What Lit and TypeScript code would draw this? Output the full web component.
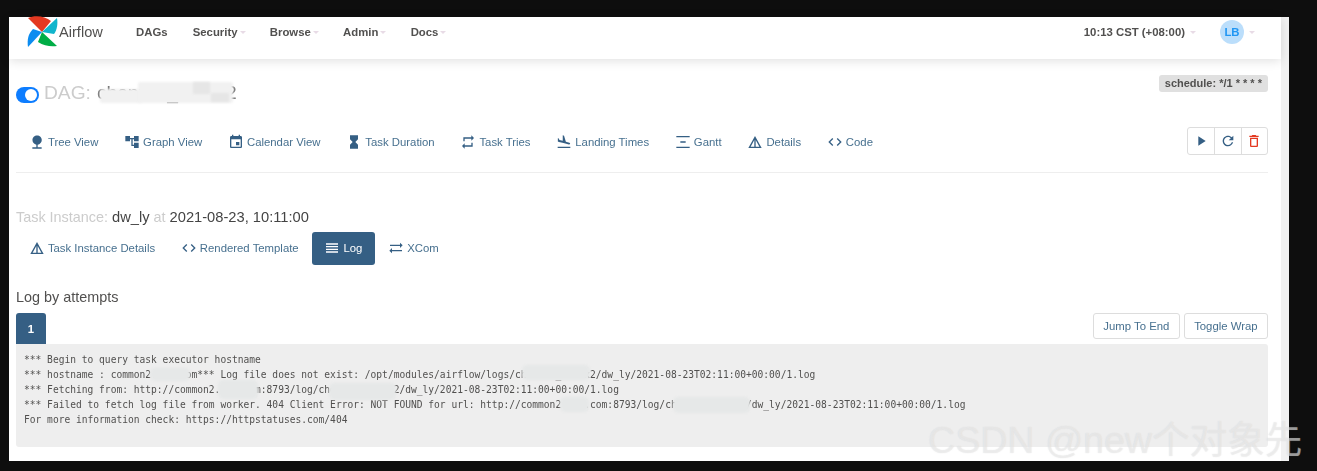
import { LitElement, html, css, svg } from "lit";
import { customElement } from "lit/decorators.js";

const I: Record<string, string> = {
  nature: "M13 16.12c3.47-.41 6.17-3.36 6.17-6.95 0-3.87-3.13-7-7-7s-7 3.13-7 7c0 3.47 2.52 6.34 5.83 6.89V20H5v2h14v-2h-6v-3.88z",
  tree: "M22 11V3h-7v3H9V3H2v8h7V8h2v10h4v3h7v-8h-7v3h-2V8h2v3z",
  event: "M17 12h-5v5h5v-5zM16 1v2H8V1H6v2H5c-1.11 0-1.99.9-1.99 2L3 19c0 1.1.89 2 2 2h14c1.1 0 2-.9 2-2V5c0-1.1-.9-2-2-2h-1V1h-2zm3 18H5V8h14v11z",
  hourglass: "M6 2v6h.01L6 8.01 10 12l-4 4 .01.01H6V22h12v-5.99h-.01L18 16l-4-4 4-3.99-.01-.01H18V2H6z",
  repeat: "M7 7h10v3l4-4-4-4v3H5v6h2V7zm10 10H7v-3l-4 4 4 4v-3h12v-6h-2v4z",
  land: "M2.5 19h19v2h-19zm7.18-5.73l4.35 1.16 5.31 1.42c.8.21 1.62-.26 1.84-1.06.21-.8-.26-1.62-1.06-1.84l-5.31-1.42-2.76-9.02L10.12 2v8.28L5.15 8.95l-.93-2.32-1.45-.39v5.17l1.6.43 5.31 1.43z",
  gantt: "M2 3h20v2H2zM8 11h8v2H8zM2 19h20v2H2z",
  details: "M12 3L2 21h20L12 3zm1 5.92L18.6 19H13V8.92zm-2 0V19H5.4L11 8.92z",
  code: "M9.4 16.6L4.8 12l4.6-4.6L8 6l-6 6 6 6 1.4-1.4zm5.2 0l4.6-4.6-4.6-4.6L16 6l6 6-6 6-1.4-1.4z",
  reorder: "M3 15h18v-2H3v2zm0 4h18v-2H3v2zm0-8h18V9H3v2zm0-6v2h18V5H3z",
  xcom: "M22 8l-4-4v3H3v2h15v3l4-4zM2 16l4 4v-3h15v-2H6v-3l-4 4z",
  play: "M8 5v14l11-7z",
  refresh: "M17.65 6.35C16.2 4.9 14.21 4 12 4c-4.42 0-7.99 3.58-7.99 8s3.57 8 7.99 8c3.73 0 6.84-2.55 7.73-6h-2.08c-.82 2.33-3.04 4-5.65 4-3.31 0-6-2.69-6-6s2.69-6 6-6c1.66 0 3.14.69 4.22 1.78L13 11h7V4l-2.35 2.35z",
  trash: "M6 19c0 1.1.9 2 2 2h8c1.1 0 2-.9 2-2V7H6v12zM8 9h8v10H8V9zm7.5-5l-1-1h-5l-1 1H5v2h14V4h-3.5z",
};

const icon = (n: string) =>
  html`<svg class="ic" viewBox="0 0 24 24" aria-hidden="true">${svg`<path d=${I[n]}></path>`}</svg>`;

const viewTabs: [string, string][] = [
  ["nature", "Tree View"],
  ["tree", "Graph View"],
  ["event", "Calendar View"],
  ["hourglass", "Task Duration"],
  ["repeat", "Task Tries"],
  ["land", "Landing Times"],
  ["gantt", "Gantt"],
  ["details", "Details"],
  ["code", "Code"],
];

const taskTabs: [string, string, boolean][] = [
  ["details", "Task Instance Details", false],
  ["code", "Rendered Template", false],
  ["reorder", "Log", true],
  ["xcom", "XCom", false],
];

const logText = `*** Begin to query task executor hostname
*** hostname : common2.xxx.com*** Log file does not exist: /opt/modules/airflow/logs/chenxxx_xxxxx2/dw_ly/2021-08-23T02:11:00+00:00/1.log
*** Fetching from: http://common2.xxx.com:8793/log/chenxxx_xxxxx2/dw_ly/2021-08-23T02:11:00+00:00/1.log
*** Failed to fetch log file from worker. 404 Client Error: NOT FOUND for url: http://common2.xxx.com:8793/log/chenxxx_xxxxx2/dw_ly/2021-08-23T02:11:00+00:00/1.log
For more information check: https://httpstatuses.com/404`;

@customElement("app-root")
export class AppRoot extends LitElement {
  static styles = css`
    :host {
      display: block;
      height: 471px;
      background: #0e0e0e;
      padding: 17px 0 10px 9px;
      box-sizing: border-box;
      overflow: hidden;
      position: relative;
      font-family: "Liberation Sans", Arial, sans-serif;
      font-size: 11.35px;
      color: #51504f;
    }
    .frame {
      width: 1280px;
      height: 444px;
      background: #fff;
      display: flex;
      filter: blur(0.5px);
    }
    .main { flex: 1; min-width: 0; display: flex; flex-direction: column; position: relative; }
    .scroll { width: 8px; background: #f1f1f1; }
    .nav {
      height: 42px;
      flex: none;
      display: flex;
      align-items: center;
      background: #fff;
      box-shadow: 0 2px 10px rgba(0, 0, 0, 0.12);
      padding: 0 26px 0 18px;
      box-sizing: border-box;
    }
    .logo { width: 32px; height: 32px; margin: -12px 0 0 0; flex: none; overflow: hidden; }
    .brand { font-size: 14.6px; margin: -12px 33px 0 0; color: #51504f; width: 44px; }
    .menu { font-weight: 700; margin-right: 24.3px; margin-top: -12px; display: flex; align-items: center; }
    .menu.plain { margin-right: 25.2px; }
    .caret {
      display: inline-block;
      width: 0;
      height: 0;
      margin-left: 2px;
      border-left: 3px solid transparent;
      border-right: 3px solid transparent;
      border-top: 3px solid #e8dbe6;
    }
    .spacer { flex: 1; }
    .avatar {
      width: 24px;
      height: 24px;
      border-radius: 50%;
      background: #bbdefb;
      color: #2196f3;
      font-weight: 700;
      display: flex;
      align-items: center;
      justify-content: center;
      margin-left: 24px;
    }
    .nav-right { display: flex; align-items: center; margin-top: -12px; font-weight: 700; }
    .nav-right .caret { margin-left: 5px; }
    .content { flex: 1; padding: 0 13px 0 7px; position: relative; }
    .dag-row { display: flex; justify-content: space-between; align-items: flex-start; padding-top: 16px; height: 50px; box-sizing: border-box; }
    .dag-title { display: flex; align-items: center; font-size: 19.2px; color: #ccc; margin-top: 7px; height: 22px; }
    .dag-name { color: #777; margin-left: 6px; }
    .toggle {
      width: 23px;
      height: 16px;
      border-radius: 8px;
      background: #0d7dff;
      margin-right: 5px;
      margin-top: 3px;
      position: relative;
      flex: none;
    }
    .toggle::after {
      content: "";
      position: absolute;
      right: 2px;
      top: 2px;
      width: 12px;
      height: 12px;
      border-radius: 50%;
      background: #fff;
    }
    .badge {
      background: #e0e0e0;
      color: #51504f;
      font-weight: 700;
      font-size: 11px;
      border-radius: 3px;
      padding: 0 6px;
      height: 17px;
      line-height: 17px;
    }
    .view-row { display: flex; align-items: center; justify-content: space-between; height: 64px; border-bottom: 1px solid #eee; padding-top: 2px; box-sizing: border-box; }
    .pills { display: flex; align-items: center; }
    .pill {
      display: flex;
      align-items: center;
      height: 32px;
      padding: 0 12.9px;
      color: #47708f;
      border-radius: 3px;
      white-space: nowrap;
    }
    .pill.active { background: #355f84; color: #fff; }
    .ic { width: 16px; height: 16px; fill: #355f84; flex: none; margin-right: 3px; }
    .pill.active .ic { fill: #fff; }
    .btn-group { display: flex; border: 1px solid #ddd; border-radius: 3px; height: 28px; box-sizing: border-box; margin-top: -2px; }
    .btn-group span { width: 26.5px; display: flex; align-items: center; justify-content: center; border-left: 1px solid #ddd; box-sizing: border-box; }
    .btn-group span:first-child { border-left: 0; }
    .btn-group .ic { margin: 0; }
    .btn-group .red .ic { fill: #e43921; }
    .ti-title { font-size: 14.4px; color: #ccc; margin-top: 35px; height: 18px; line-height: 18px; }
    .ti-title b { font-weight: 400; color: #444; font-size: 14.7px; }
    .task-pills { margin: 6px 0 0 0; }
    .task-pills .pill { height: 33px; box-sizing: border-box; padding-bottom: 1px; }
    .log-title { font-size: 14.4px; color: #51504f; margin-top: 24px; height: 16px; line-height: 16px; }
    .log-head { display: flex; align-items: flex-start; justify-content: space-between; margin-top: 8px; }
    .attempt { width: 30px; height: 31px; border-radius: 3px 3px 0 0; background: #355f84; color: #fff; display: flex; align-items: center; justify-content: center; font-weight: 700; }
    .log-btns { display: flex; gap: 4px; }
    .log-btn {
      height: 26px;
      box-sizing: border-box;
      border: 1px solid #ddd;
      border-radius: 3px;
      padding: 0 9.4px;
      display: flex;
      align-items: center;
      color: #47708f;
    }
    pre {
      margin: 0;
      height: 103px;
      box-sizing: border-box;
      background: #eee;
      border-radius: 0 3px 3px 3px;
      padding: 8px 8px;
      font-family: "DejaVu Sans Mono", "Liberation Mono", monospace;
      font-size: 9.6px;
      line-height: 15px;
      color: #51504f;
      white-space: pre;
    }
    .blob { position: absolute; background: #e6e8e8; border-radius: 5px; filter: blur(1px); }
    .blob.soft { background: #f1f1f1; border-radius: 2px; }
    .blob.tile { background: #e6e6e6; border-radius: 0; }
    .mark {
      position: absolute;
      left: 928px;
      top: 418px;
      font-size: 37.6px;
      line-height: 44px;
      color: rgba(245, 245, 245, 0.5);
      font-family: "Liberation Sans", "Noto Sans CJK SC", sans-serif;
      text-shadow: 0 0 1px rgba(170, 170, 170, 0.35);
      white-space: nowrap;
      pointer-events: none;
    }
  `;

  private blobs: [number, number, number, number, string][] = [
    [100, 89, 42, 14, "soft"],
    [138, 82, 95, 21, "soft"],
    [193, 82, 17, 12, "tile"],
    [211, 93, 18, 9, "tile"],
    [150, 368, 40, 13, ""],
    [522, 365, 68, 15, ""],
    [218, 380, 40, 19, ""],
    [329, 383, 67, 17, ""],
    [560, 397, 29, 15, ""],
    [673, 397, 77, 16, ""],
  ];

  render() {
    return html`
      <div class="frame">
        <div class="main">
          <div class="nav">
            <svg class="logo" viewBox="0 0 32 32" aria-hidden="true">
              <path d="M15 16 L1 2 C8 -1 18 0 24 5Z" fill="#e43921"></path>
              <path d="M15 16 L30 2 C31 8 30 14 27 18Z" fill="#11b5cc"></path>
              <path d="M15 16 L30 30 C24 31 17 30 11 26Z" fill="#00ad46"></path>
              <path d="M15 16 L1 31 C0 24 1 18 6 13Z" fill="#0c8cf0"></path>
            </svg>
            <span class="brand">Airflow</span>
            ${["DAGs", "Security", "Browse", "Admin", "Docs"].map((m) =>
              m === "DAGs"
                ? html`<span class="menu plain">${m}</span>`
                : html`<span class="menu">${m}<i class="caret"></i></span>`
            )}
            <span class="spacer"></span>
            <div class="nav-right">
              <span>10:13 CST (+08:00)</span><i class="caret"></i>
              <span class="avatar">LB</span><i class="caret"></i>
            </div>
          </div>
          <div class="content">
            <div class="dag-row">
              <div class="dag-title"><i class="toggle"></i>DAG:<span class="dag-name">chenxxx_xxxxx2</span></div>
              <span class="badge">schedule: */1 * * * *</span>
            </div>
            <div class="view-row">
              <div class="pills">
                ${viewTabs.map(([i, t]) => html`<span class="pill">${icon(i)}${t}</span>`)}
              </div>
              <div class="btn-group">
                <span>${icon("play")}</span><span>${icon("refresh")}</span><span class="red">${icon("trash")}</span>
              </div>
            </div>
            <div class="ti-title">Task Instance: <b>dw_ly</b> at <b>2021-08-23, 10:11:00</b></div>
            <div class="pills task-pills">
              ${taskTabs.map(([i, t, a]) => html`<span class="pill ${a ? "active" : ""}">${icon(i)}${t}</span>`)}
            </div>
            <div class="log-title">Log by attempts</div>
            <div class="log-head">
              <span class="attempt">1</span>
              <div class="log-btns"><span class="log-btn">Jump To End</span><span class="log-btn">Toggle Wrap</span></div>
            </div>
            <pre>${logText}</pre>
          </div>
        </div>
        <div class="scroll"></div>
      </div>
      ${this.blobs.map(
        ([x, y, w, h, c]) => html`<div class="blob ${c}" style="left:${x}px;top:${y}px;width:${w}px;height:${h}px"></div>`
      )}
      <div class="mark">CSDN @new个对象先</div>
    `;
  }
}
